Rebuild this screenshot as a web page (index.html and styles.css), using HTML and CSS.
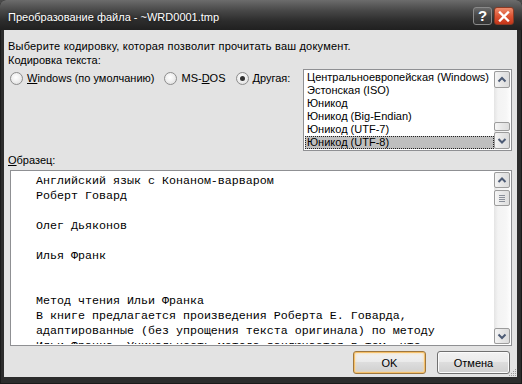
FILE: index.html
```html
<!DOCTYPE html>
<html lang="ru">
<head>
<meta charset="utf-8">
<title>Преобразование файла</title>
<link rel="stylesheet" href="styles.css">
</head>
<body>
<div class="window">
  <div class="titlebar">
    <span class="title">Преобразование файла - ~WRD0001.tmp</span>
    <div class="caption-btns">
      <span class="cbtn help">?</span>
      <span class="cbtn close"><svg width="12" height="11" viewBox="0 0 12 11"><path d="M2 1.5 L10 9.5 M10 1.5 L2 9.5" stroke="#fff" stroke-width="2.4" stroke-linecap="square"/></svg></span>
    </div>
  </div>
  <div class="client">
    <div class="intro">Выберите кодировку, которая позволит прочитать ваш документ.</div>
    <div class="enc-row">
      <div class="enc-left">
        <div class="label">Кодировка текста:</div>
        <div class="radios">
          <span class="radio"><span class="rb"></span><span><u>W</u>indows (по умолчанию)</span></span>
          <span class="radio"><span class="rb"></span><span>MS-<u>D</u>OS</span></span>
          <span class="radio"><span class="rb on"></span><span><u>Д</u>ругая:</span></span>
        </div>
      </div>
      <div class="listbox">
        <ul class="items">
          <li class="item">Центральноевропейская (Windows)</li>
          <li class="item">Эстонская (ISO)</li>
          <li class="item">Юникод</li>
          <li class="item">Юникод (Big-Endian)</li>
          <li class="item">Юникод (UTF-7)</li>
          <li class="item sel">Юникод (UTF-8)</li>
        </ul>
        <div class="vscroll">
          <span class="sbtn up"><svg width="14" height="15" viewBox="0 0 14 15"><polyline points="3.5,9.5 7,6 10.5,9.5" fill="none" stroke="#4d5b75" stroke-width="2"/></svg></span>
          <span class="track-fill list-top"></span>
          <span class="thumb small"></span>
          <span class="track-fill gap"></span>
          <span class="sbtn down"><svg width="14" height="15" viewBox="0 0 14 15"><polyline points="3.5,6 7,9.5 10.5,6" fill="none" stroke="#4d5b75" stroke-width="2"/></svg></span>
        </div>
      </div>
    </div>
    <div class="label sample-label"><u>О</u>бразец:</div>
    <div class="sample">
<pre class="sample-text">Английский язык с Конаном-варваром
Роберт Говард

Олег Дьяконов

Илья Франк


Метод чтения Ильи Франка
В книге предлагается произведения Роберта Е. Говарда,
адаптированные (без упрощения текста оригинала) по методу
Ильи Франка. Уникальность метода заключается в том, что</pre>
      <div class="vscroll">
        <span class="sbtn up s16"><svg width="14" height="14" viewBox="0 0 14 14"><polyline points="3.5,9 7,5.5 10.5,9" fill="none" stroke="#4d5b75" stroke-width="2"/></svg></span>
        <span class="thumb grip-thumb"><span class="gl"></span><span class="gl"></span><span class="gl"></span><span class="gl"></span></span>
        <span class="track-fill rest"></span>
        <span class="sbtn down s16"><svg width="14" height="14" viewBox="0 0 14 14"><polyline points="3.5,5.5 7,9 10.5,5.5" fill="none" stroke="#4d5b75" stroke-width="2"/></svg></span>
      </div>
    </div>
    <div class="buttons">
      <button class="btn default">OK</button>
      <button class="btn">Отмена</button>
    </div>
    <svg class="grip" width="10" height="10" viewBox="0 0 10 10">
      <rect x="8" y="2" width="1" height="1" fill="#9a9a9a"/>
      <rect x="6" y="4" width="1" height="1" fill="#9a9a9a"/>
      <rect x="8" y="4" width="1" height="1" fill="#9a9a9a"/>
      <rect x="4" y="6" width="1" height="1" fill="#9a9a9a"/>
      <rect x="6" y="6" width="1" height="1" fill="#9a9a9a"/>
      <rect x="8" y="6" width="1" height="1" fill="#9a9a9a"/>
      <rect x="2" y="8" width="1" height="1" fill="#9a9a9a"/>
      <rect x="4" y="8" width="1" height="1" fill="#9a9a9a"/>
      <rect x="6" y="8" width="1" height="1" fill="#9a9a9a"/>
      <rect x="8" y="8" width="1" height="1" fill="#9a9a9a"/>
    </svg>
  </div>
</div>
</body>
</html>
```
FILE: styles.css
```css
* { box-sizing: border-box; }
html, body { margin: 0; padding: 0; }
body {
  width: 522px;
  height: 384px;
  overflow: hidden;
  background: #4a4a4a;
  font-family: "Liberation Sans", Arial, sans-serif;
  font-size: 11px;
  color: #000;
}
.window {
  height: 384px;
  display: flex;
  flex-direction: column;
  background: #2c2c2c;
  border-radius: 6px 6px 0 0;
  box-shadow: inset 0 0 0 1px #1a1a1a;
}
.titlebar {
  height: 30px;
  flex: none;
  display: flex;
  align-items: flex-start;
  padding: 0 8px 0 8px;
  border-radius: 6px 6px 0 0;
  background: linear-gradient(#6c6c6c 0, #484848 35%, #2c2c2c 70%, #202020 100%);
}
.title {
  flex: 1;
  color: #fff;
  font-size: 11px;
  line-height: 14px;
  margin-top: 10px;
  white-space: nowrap;
  text-shadow: 0 0 3px rgba(0, 0, 0, 0.6);
}
.caption-btns {
  display: flex;
  gap: 2px;
  margin-top: 7px;
}
.cbtn {
  height: 18px;
  border-radius: 3px;
  display: flex;
  align-items: center;
  justify-content: center;
}
.help {
  width: 19px;
  background: linear-gradient(#6a6a6a, #444 50%, #333);
  border: 1px solid #8a8a8a;
  color: #fff;
  font: bold 15px/16px "Liberation Sans", Arial, sans-serif;
}
.close {
  width: 20px;
  background: linear-gradient(#ee8c6c, #dc5434 50%, #c4361a);
  border: 1px solid #8a3a24;
}
.client {
  position: relative;
  flex: 1;
  margin: 0 5px 7px 4px;
  background: #e3e3e3;
  padding: 9px 5px 0 4px;
  display: flex;
  flex-direction: column;
}
.intro, .label { line-height: 14px; white-space: nowrap; }
.intro { letter-spacing: 0.2px; }
.enc-row { display: flex; }
.enc-left { flex: none; }
.radios {
  display: flex;
  align-items: center;
  height: 16px;
  margin-top: 3px;
  margin-left: 2px;
}
.radio {
  display: flex;
  align-items: center;
  gap: 4px;
  margin-right: 10px;
  white-space: nowrap;
}
.rb {
  position: relative;
  width: 13px;
  height: 13px;
  border-radius: 50%;
  border: 1px solid #8d8d8d;
  background: radial-gradient(circle at 45% 40%, #ffffff 0, #f0f0f0 45%, #d8d8d8 100%);
}
.rb.on::after {
  content: "";
  position: absolute;
  left: 3px;
  top: 3px;
  width: 5px;
  height: 5px;
  border-radius: 50%;
  background: #333;
}
.listbox {
  margin-left: auto;
  margin-top: 16px;
  width: 209px;
  height: 82px;
  border: 1px solid #8f9093;
  background: #fff;
  padding: 1px;
  display: flex;
}
.items {
  flex: 1;
  list-style: none;
  margin: 0;
  padding: 0;
  overflow: hidden;
}
.item {
  height: 13px;
  line-height: 13px;
  padding-left: 2px;
  white-space: nowrap;
}
.item.sel {
  background: #bfbfbf;
  outline: 1px dotted #222;
  outline-offset: -1px;
}
.vscroll {
  width: 16px;
  flex: none;
  display: flex;
  flex-direction: column;
  background: linear-gradient(90deg, #e4e4e4 0, #f3f3f3 25%, #f6f6f6 75%, #fdfdfd 100%);
}
.sbtn {
  height: 17px;
  flex: none;
  display: flex;
  align-items: center;
  justify-content: center;
  border: 1px solid #9c9c9c;
  border-radius: 2px;
  background: linear-gradient(90deg, #f4f4f4, #e6e6e6 50%, #dcdcdc);
}
.sbtn.s16 { height: 16px; }
.track-fill { flex: none; }
.track-fill.list-top { height: 34px; }
.track-fill.gap { flex: 1; }
.track-fill.rest { flex: 1; }
.thumb {
  flex: none;
  border: 1px solid #9c9c9c;
  border-radius: 2px;
  background: linear-gradient(90deg, #f6f6f6, #e8e8e8 50%, #dedede);
}
.thumb.small { height: 9px; }
.thumb.grip-thumb {
  height: 16px;
  margin-top: 2px;
  display: flex;
  flex-direction: column;
  align-items: center;
  justify-content: center;
  gap: 1px;
}
.gl {
  width: 6px;
  height: 1px;
  background: #8a8f99;
}
.sample-label { margin-top: 2px; }
.sample {
  margin-top: 3px;
  margin-left: 2px;
  height: 176px;
  border: 1px solid #8f9093;
  background: #fff;
  padding: 1px;
  display: flex;
  overflow: hidden;
}
.sample-text {
  flex: 1;
  margin: 0;
  padding: 1.5px 0 0 24px;
  font-family: "Liberation Mono", "Courier New", monospace;
  font-size: 11.67px;
  line-height: 15px;
  white-space: pre;
  overflow: hidden;
  color: #000;
}
.buttons {
  display: flex;
  justify-content: flex-end;
  gap: 11px;
  margin-top: 5px;
  margin-right: 2px;
}
.btn {
  width: 73px;
  height: 23px;
  padding: 0;
  border: 1px solid #707070;
  border-radius: 3px;
  background: linear-gradient(#f2f2f2 0, #ebebeb 45%, #dddddd 50%, #cfcfcf 100%);
  box-shadow: inset 0 0 0 1px #fbfbfb;
  font-family: "Liberation Sans", Arial, sans-serif;
  font-size: 11px;
  color: #000;
}
.btn.default {
  border-color: #a0773c;
  box-shadow: inset 0 0 0 1px #f5c06a, inset 0 0 3px 1px #fbd79a;
}
.grip {
  position: absolute;
  right: 0;
  bottom: 0;
}
```
